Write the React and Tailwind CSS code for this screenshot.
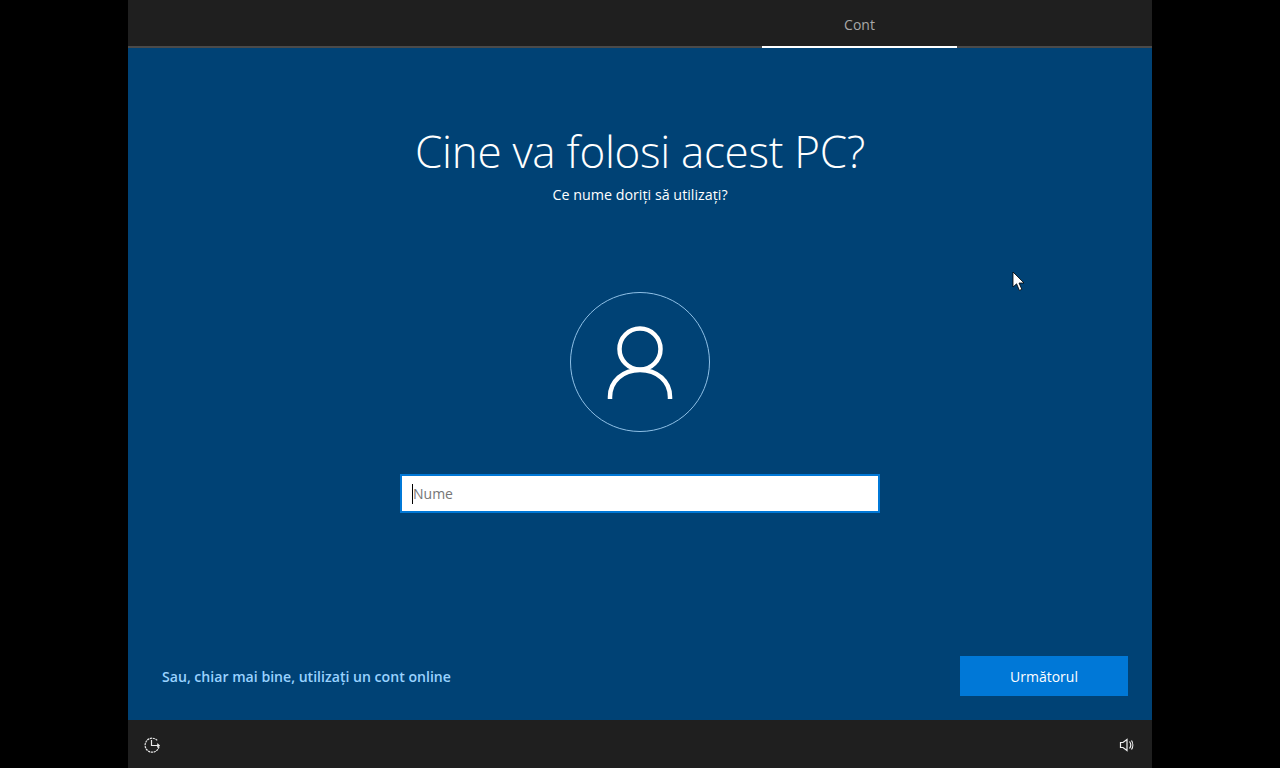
import React from "react";

const font = "font-['Open_Sans','Noto_Sans',sans-serif]";

const RestartIcon = () => (
  <svg width="18" height="18" viewBox="0 0 18 18" fill="none" stroke="#e8e8e8" strokeWidth="1.2">
    <path d="M14.2 4.4A7 7 0 1 0 16 10.5" strokeDasharray="2.2 0.7" />
    <path d="M8.5 4V9.5H16" />
    <path d="M14.2 7.7L16.2 9.5L14.2 11.3" />
  </svg>
);

const VolumeIcon = () => (
  <svg width="16" height="16" viewBox="0 0 16 16" fill="none" stroke="#f0f0f0" strokeWidth="1.2">
    <path d="M1.5 5.5H4L8 2.5V13.5L4 10.5H1.5Z" />
    <path d="M10.5 4.5C12 6.5 12 9.5 10.5 11.5" />
    <path d="M12.5 3.5C14.2 6 14.2 10 12.5 12.5" />
  </svg>
);

const UserIcon = () => (
  <svg width="66" height="74" viewBox="0 0 66 74" fill="none" stroke="#fff" strokeWidth="4.5">
    <circle cx="33" cy="24" r="20.5" />
    <path d="M3 74V72C3 56 16 45 33 45C50 45 63 56 63 72V74" />
  </svg>
);

const Cursor = () => (
  <svg
    className="absolute left-[1012px] top-[271px]"
    width="14"
    height="21"
    viewBox="0 0 14 21"
  >
    <path d="M1 1V16L4.6 12.8L7.4 19.4L9.8 18.3L7 12H12Z" fill="#fff" stroke="#000" strokeWidth="0.8" />
  </svg>
);

export default function App() {
  return (
    <div className={`relative flex h-[768px] justify-center overflow-hidden bg-black ${font}`}>
      <div className="flex w-[1024px] flex-col">
        <header className="flex h-12 shrink-0 justify-end border-b-2 border-[#4a4a4a] bg-[#1f1f1f] pr-[195px]">
          <div className="-mb-0.5 flex h-12 w-[195px] items-center justify-center border-b-2 border-white pt-1 text-sm text-[#a8a8a8]">
            Cont
          </div>
        </header>

        <main className="flex min-h-0 flex-1 flex-col items-center bg-[#004275] text-white">
          <h1 className="mt-[70px] text-[44px] font-light leading-[66px] tracking-[-0.3px]">
            Cine va folosi acest PC?
          </h1>
          <p className="mt-[1px] text-[14.3px] leading-5">Ce nume doriți să utilizați?</p>

          <div className="mt-[87px] flex size-[140px] items-center justify-center rounded-full border border-[#8fc0e6]">
            <UserIcon />
          </div>

          <div className="mt-[42px] flex h-[39px] w-[480px] items-center border-2 border-[#0078d7] bg-white pl-[10px] text-sm text-[#767676]">
            <span className="h-5 w-px bg-black" />
            <span>Nume</span>
          </div>

          <div className="mt-auto flex w-full items-center justify-between pb-6 pl-[34px] pr-6">
            <a className="pt-0.5 text-[14.1px] font-semibold text-[#99d2ff]">Sau, chiar mai bine, utilizați un cont online</a>
            <button className="h-10 w-[168px] bg-[#0078d7] pt-0.5 text-sm font-medium text-white">Următorul</button>
          </div>
        </main>

        <footer className="flex h-12 shrink-0 items-center justify-between bg-[#1f1f1f] pl-[15px] pr-[17px] pt-0.5">
          <RestartIcon />
          <VolumeIcon />
        </footer>
      </div>
      <Cursor />
    </div>
  );
}
